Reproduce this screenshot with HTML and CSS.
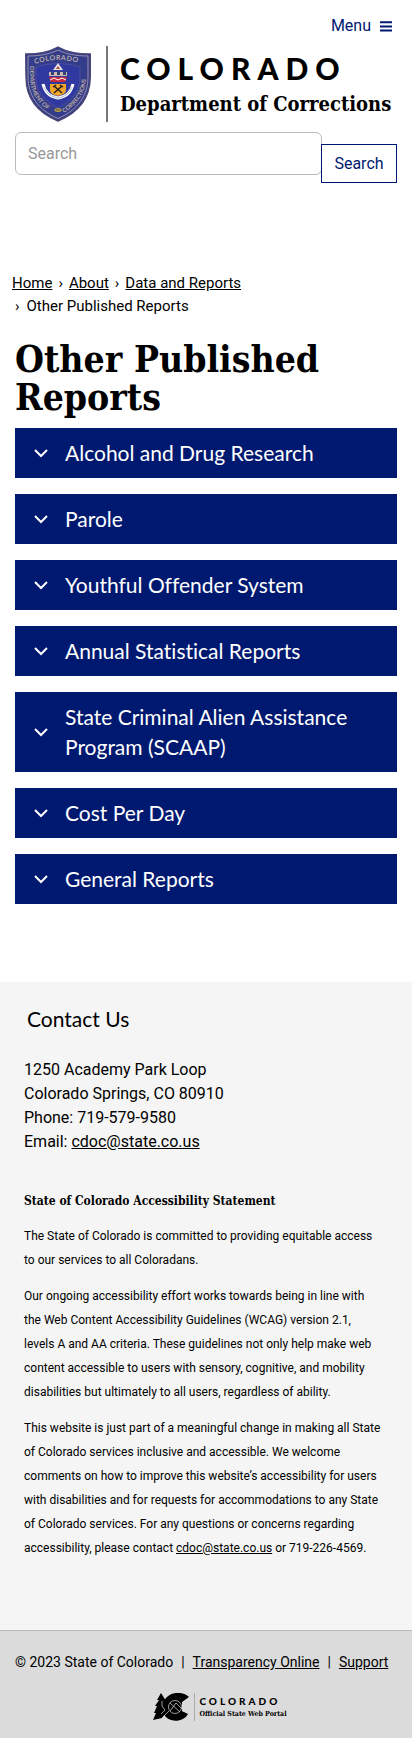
FILE: index.html
```html
<!DOCTYPE html>
<html lang="en">
<head>
<meta charset="utf-8">
<meta name="viewport" content="width=device-width, initial-scale=1">
<title>Other Published Reports | Department of Corrections</title>
<link rel="stylesheet" href="styles.css">
</head>
<body>
<header class="site-header">
  <div class="menu-bar">
    <button class="menu-button" type="button">Menu
      <svg class="menu-icon" viewBox="0 0 12 11" aria-hidden="true"><path d="M0 1.2h12M0 5.4h12M0 9.6h12"/></svg>
    </button>
  </div>
  <a class="brand" href="#">
    <svg class="shield" viewBox="0 0 66 76" role="img" aria-label="Department of Corrections seal">
      <defs>
        <path id="arc-top" d="M10 18Q33 10 57 18"/>
        <path id="arc-left" d="M5 20V31C5 47 13 58 27 67"/>
        <path id="arc-right" d="M39 67C53 58 61 46 61 32V19"/>
      </defs>
      <path class="shield-edge" d="M.7 8C13 8 24 6 33 1c9 5 20 7 32.300 7V31C65 51 55 66 33 75 11 66 1 51 1 31Z"/>
      <path class="shield-line" d="M3 10C15 10 25 8 33 4c8 4 18 6 30 6V31C63 49 53 64 33 72.500 13 64 3 49 3 31Z"/>
      <path class="shield-inner" d="M11 21Q33 14 55 21V32C55 44 48 54 33 62 18 54 11 44 11 32Z"/>
      <text class="shield-text"><textPath href="#arc-top">COLORADO</textPath></text>
      <text class="shield-text shield-small"><textPath href="#arc-left">DEPARTMENT OF</textPath></text>
      <text class="shield-text shield-small"><textPath href="#arc-right">CORRECTIONS</textPath></text>
      <path fill="#e9e2dc" d="m33 17 5 7H28Z"/>
      <path fill="#a8443e" d="m33 20 2 3h-4Z"/>
      <path fill="#c9b9b0" d="M24 26h18v4H24Z"/>
      <path fill="#35436e" d="M26 26h3v3h-3ZM32 25h3v4h-3ZM38 26h3v3h-3Z"/>
      <path fill="#c9293c" d="M24 31h18l-2 5H26Z"/>
      <path stroke="#fff" d="m25 34 4-2 4 2 4-2 4 2"/>
      <path fill="#efa42b" d="M25 38h16v6c0 4-5 5-8 6-3-1-8-2-8-6Z"/>
      <path stroke="#251d20" stroke-width="1.500" d="m29 40 8 7m0-7-8 7m-1-6 3-2m7 2-3-2"/>
      <path stroke="#fff" stroke-width="3" d="M18 38c2 9 8 13 15 14 7-1 13-5 15-14"/>
      <path stroke="#7184b4" stroke-width=".6" d="M19 41c3 7 8 10 14 11 6-1 11-4 14-11"/>
      <ellipse cx="33" cy="64" rx="3.500" ry="2" fill="#b49b48"/>
      <path stroke="#302c50" stroke-width=".7" d="M31 64h4"/>
    </svg>
    <span class="brand-text">
      <span class="brand-state">COLORADO</span>
      <span class="brand-dept">Department of Corrections</span>
    </span>
  </a>
  <form class="search" onsubmit="return false">
    <input class="search-input" type="search" placeholder="Search" aria-label="Search">
    <button class="search-button" type="submit">Search</button>
  </form>
</header>
<main class="content">
  <nav class="breadcrumb" aria-label="Breadcrumb">
    <ol class="crumbs">
      <li><a href="#">Home</a></li>
      <li><a href="#">About</a></li>
      <li><a href="#">Data and Reports</a></li>
      <li>Other Published Reports</li>
    </ol>
  </nav>
  <h1 class="title">Other Published Reports</h1>
  <div class="accordion">
    <button class="panel" type="button"><svg class="chevron" viewBox="0 0 14 9" aria-hidden="true"><path d="m1 1 6 6 6-6"/></svg><span>Alcohol and Drug Research</span></button>
    <button class="panel" type="button"><svg class="chevron" viewBox="0 0 14 9" aria-hidden="true"><path d="m1 1 6 6 6-6"/></svg><span>Parole</span></button>
    <button class="panel" type="button"><svg class="chevron" viewBox="0 0 14 9" aria-hidden="true"><path d="m1 1 6 6 6-6"/></svg><span>Youthful Offender System</span></button>
    <button class="panel" type="button"><svg class="chevron" viewBox="0 0 14 9" aria-hidden="true"><path d="m1 1 6 6 6-6"/></svg><span>Annual Statistical Reports</span></button>
    <button class="panel" type="button"><svg class="chevron" viewBox="0 0 14 9" aria-hidden="true"><path d="m1 1 6 6 6-6"/></svg><span>State Criminal Alien Assistance Program (SCAAP)</span></button>
    <button class="panel" type="button"><svg class="chevron" viewBox="0 0 14 9" aria-hidden="true"><path d="m1 1 6 6 6-6"/></svg><span>Cost Per Day</span></button>
    <button class="panel" type="button"><svg class="chevron" viewBox="0 0 14 9" aria-hidden="true"><path d="m1 1 6 6 6-6"/></svg><span>General Reports</span></button>
  </div>
</main>
<section class="contact">
  <h2 class="contact-title">Contact Us</h2>
  <address class="address">1250 Academy Park Loop<br>Colorado Springs, CO 80910<br>Phone: 719-579-9580<br>Email: <a href="mailto:cdoc@state.co.us">cdoc@state.co.us</a></address>
  <h3 class="statement-title">State of Colorado Accessibility Statement</h3>
  <div class="statement">
    <p>The State of Colorado is committed to providing equitable access to our services to all Coloradans.</p>
    <p>Our ongoing accessibility effort works towards being in line with the Web Content Accessibility Guidelines (WCAG) version 2.1, levels A and AA criteria. These guidelines not only help make web content accessible to users with sensory, cognitive, and mobility disabilities but ultimately to all users, regardless of ability.</p>
    <p>This website is just part of a meaningful change in making all State of Colorado services inclusive and accessible. We welcome comments on how to improve this website’s accessibility for users with disabilities and for requests for accommodations to any State of Colorado services. For any questions or concerns regarding accessibility, please contact <a href="mailto:cdoc@state.co.us">cdoc@state.co.us</a> or 719-226-4569.</p>
  </div>
</section>
<footer class="site-footer">
  <div class="legal"><span>© 2023 State of Colorado</span><span>|</span><a href="#">Transparency Online</a><span>|</span><a href="#">Support</a></div>
  <a class="portal" href="#">
    <svg class="portal-mark" viewBox="0 0 36 28" aria-hidden="true">
      <path d="M8 0 4 7h2l-4 6h2l-3 7h2L0 27l9-2 4-5V8Z"/>
      <path d="M36 4C31-1 20-2 14 4 7 10 8 21 14 25c7 5 17 3 21-4l-6-3V9Z"/>
      <path class="portal-gap" d="m36 9-7 1a8 8 0 0 1 0 8l6 2Z"/>
      <g class="portal-lines"><circle cx="22" cy="14" r="6.500"/><path d="m17 18 6-8 6 6M17 10l10 9M16 18l-7 7M9 8v5l3 4-4 4"/></g>
    </svg>
    <span class="portal-text">
      <span class="portal-state">COLORADO</span>
      <span class="portal-name">Official State Web Portal</span>
    </span>
  </a>
</footer>
</body>
</html>
```
FILE: styles.css
```css
:root {
  --navy: #001970;
  --body: "Trebuchet MS", Roboto, sans-serif;
  --sans: "Museo Sans", Lato, sans-serif;
  --slab: "Museo Slab", "DejaVu Serif Condensed", "DejaVu Serif", serif;
}
* { box-sizing: border-box; }
body { margin: 0; background: #fff; color: #000; font: 16px/24px var(--body); }
button, input { font: inherit; }
a { color: inherit; }
.site-header { padding: 14px 15px 0; }
.menu-bar { display: flex; justify-content: flex-end; padding-right: 5px; }
.menu-button { display: flex; align-items: center; gap: 9px; padding: 0; border: 0; background: none; color: var(--navy); }
.menu-icon { width: 12px; height: 11px; stroke: currentColor; stroke-width: 2; }
.brand { display: flex; margin: 8px 0 0 10px; gap: 15px; text-decoration: none; }
.shield { width: 66px; height: 76px; flex: none; fill: none; }
.shield-edge { fill: #343d8c; stroke: #4a4775; stroke-width: 1.4; }
.shield-line { stroke: #9a91aa; stroke-width: 1; }
.shield-inner { fill: #3039a0; stroke: #6763a2; stroke-width: .5; }
.shield-text { fill: #b8a9a0; font: 700 7px Lato, sans-serif; letter-spacing: .5px; }
.shield-small { font-size: 6px; letter-spacing: 0; }
.brand-text { display: flex; flex-direction: column; padding: 4px 0 0 12px; border-left: 2px solid #777; white-space: nowrap; }
.brand-state { font: 900 30px/36px Lato, sans-serif; letter-spacing: 7px; }
.brand-dept { font: 700 20px/36px var(--slab); }
.search { display: flex; align-items: flex-start; margin-top: 10px; }
.search-input { flex: 1; min-width: 0; height: 43px; padding: 0 12px; border: 1px solid #bbb; border-radius: 6px; background: #fff; color: #000; appearance: none; }
.search-input::placeholder { color: #999; opacity: 1; }
.search-button { width: 76px; height: 39px; margin: 12px 0 0 -1px; padding: 0; border: 1px solid var(--navy); background: #fff; color: var(--navy); }
.content { padding: 89px 15px 78px; }
.breadcrumb { margin: 0 0 22px -3px; }
.crumbs { display: flex; flex-wrap: wrap; max-width: 280px; margin: 0; padding: 0; list-style: none; font-size: 15px; line-height: 23px; }
.crumbs li + li::before { content: "›"; padding: 0 6px 0 6px; }
.crumbs li:last-child::before { padding: 0 7px 0 3px; }
.title { margin: 0 0 12px; font: 700 37px/38px var(--slab); }
.accordion { display: grid; gap: 16px; }
.panel { display: flex; align-items: center; gap: 17px; width: 100%; padding: 10px 19px; border: 0; background: var(--navy); color: #fff; font: 21px/30px var(--sans); font-variant-ligatures: none; text-align: left; }
.chevron { width: 14px; height: 9px; flex: none; fill: none; stroke: currentColor; stroke-width: 2; }
.contact { padding: 22px 24px 58px; background: #f5f5f5; }
.contact-title { margin: 0 0 24px 3px; font: 400 21px/30px var(--sans); }
.address { font-style: normal; }
.statement-title { margin: 35px 0 11px; font: 700 12px/24px var(--slab); }
.statement { padding-right: 6px; font-size: 12px; }
.statement p { margin: 0 0 12px; }
.site-footer { padding: 20px 15px 17px; border-top: 1px solid #bbb; background: #dbdbdb; }
.legal { display: flex; gap: 8px; font-size: 14px; line-height: 22px; white-space: nowrap; }
.portal { display: flex; justify-content: center; gap: 5px; margin-top: 20px; padding-left: 28px; text-decoration: none; }
.portal-mark { width: 36px; height: 28px; }
.portal-gap { fill: #dbdbdb; }
.portal-lines { fill: none; stroke: #dbdbdb; stroke-width: .7; }
.portal-text { display: flex; flex-direction: column; padding: 2px 0 0 4px; border-left: 1px solid #aaa; }
.portal-state { font: 900 10px/12px Lato, sans-serif; letter-spacing: 3px; }
.portal-name { font: 700 7px/14px var(--slab); }
```
